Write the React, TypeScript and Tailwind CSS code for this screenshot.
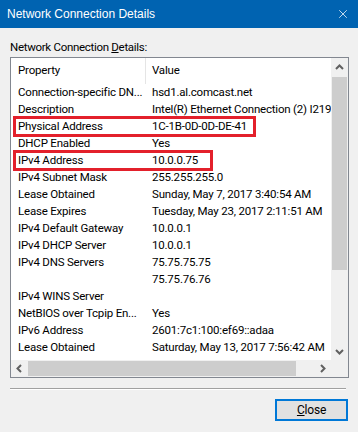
import { X } from "lucide-react";

type Row = [string, string];

const rows: Row[] = [
  ["Connection-specific DN...", "hsd1.al.comcast.net"],
  ["Description", "Intel(R) Ethernet Connection (2) I219-V"],
  ["Physical Address", "1C-1B-0D-0D-DE-41"],
  ["DHCP Enabled", "Yes"],
  ["IPv4 Address", "10.0.0.75"],
  ["IPv4 Subnet Mask", "255.255.255.0"],
  ["Lease Obtained", "Sunday, May 7, 2017 3:40:54 AM"],
  ["Lease Expires", "Tuesday, May 23, 2017 2:11:51 AM"],
  ["IPv4 Default Gateway", "10.0.0.1"],
  ["IPv4 DHCP Server", "10.0.0.1"],
  ["IPv4 DNS Servers", "75.75.75.75"],
  ["", "75.75.76.76"],
  ["IPv4 WINS Server", ""],
  ["NetBIOS over Tcpip En...", "Yes"],
  ["IPv6 Address", "2601:7c1:100:ef69::adaa"],
  ["Lease Obtained", "Saturday, May 13, 2017 7:56:42 AM"],
  ["Lease Expires", "Tuesday, May 30, 2017 7:56:42 AM"],
];

const Chevron = ({ dir }: { dir: "up" | "down" | "left" | "right" }) => {
  const d = {
    up: "M1 6 L4.5 2.5 L8 6",
    down: "M1 3 L4.5 6.5 L8 3",
    left: "M6 1 L2.5 4.5 L6 8",
    right: "M3 1 L6.5 4.5 L3 8",
  }[dir];
  return (
    <svg width="9" height="9" viewBox="0 0 9 9">
      <path d={d} fill="none" stroke="#606060" strokeWidth="2" />
    </svg>
  );
};

export default function App() {
  return (
    <div
      className="w-[358px] h-[432px] bg-[#f0f0f0] flex flex-col overflow-hidden text-black text-[11.5px] tracking-[-0.2px]"
      style={{ fontFamily: '"Roboto", "Liberation Sans", sans-serif' }}
    >
      <div className="h-[28px] bg-[#0063b1] flex items-center justify-between pl-[7px] pr-[8px] text-white tracking-normal">
        <span className="text-[12px] leading-none" style={{ fontFamily: '"Liberation Sans", sans-serif' }}>
          Network Connection Details
        </span>
        <X size={14} strokeWidth={1.3} />
      </div>

      <div className="px-[10px] pt-[12px]">
        <div className="leading-[14px] mb-[3px] tracking-[-0.3px]">
          Network Connection <span className="underline">D</span>etails:
        </div>

        <div className="w-[339px] h-[321px] border border-[#828790] bg-white flex flex-col">
          <div className="flex h-[302px]">
            <div className="relative w-[320px] overflow-hidden">
              <div className="flex h-[26px] items-center">
                <div className="w-[135px] h-full pl-[7px] flex items-center border-r border-[#e5e5e5]">Property</div>
                <div className="pl-[6px]">Value</div>
              </div>
              {rows.map(([k, v], i) => (
                <div key={i} className="flex h-[17px] items-center whitespace-nowrap">
                  <div className="w-[141px] shrink-0 pl-[7px]">{k}</div>
                  <div className="shrink-0">{v}</div>
                </div>
              ))}
              <div className="absolute left-[2px] top-[58px] w-[243px] h-[21px] border-[3px] border-[#e3202b]" />
              <div className="absolute left-[2px] top-[92px] w-[200px] h-[21px] border-[3px] border-[#e3202b]" />
            </div>
            <div className="w-[17px] bg-[#f0f0f0] flex flex-col">
              <div className="h-[19px] flex items-center justify-center">
                <Chevron dir="up" />
              </div>
              <div className="mx-[1px] h-[193px] bg-[#cdcdcd]" />
              <div className="flex-1" />
              <div className="h-[17px] flex items-center justify-center">
                <Chevron dir="down" />
              </div>
            </div>
          </div>
          <div className="flex h-[17px] bg-[#f0f0f0]">
            <div className="w-[17px] flex items-center justify-center">
              <Chevron dir="left" />
            </div>
            <div className="my-[1px] w-[268px] bg-[#cdcdcd]" />
            <div className="flex-1" />
            <div className="w-[17px] flex items-center justify-center">
              <Chevron dir="right" />
            </div>
            <div className="w-[17px]" />
          </div>
        </div>

        <div className="mt-[10px] h-[2px] w-[336px] border-t border-[#a0a0a0] border-b border-b-white" />

        <div className="flex justify-end mt-[9px]">
          <button
            type="button"
            className="w-[73px] h-[22px] bg-[#e1e1e1] border-2 border-[#0078d7] text-[12px] flex items-center justify-center"
          >
            <span className="underline">C</span>lose
          </button>
        </div>
      </div>
    </div>
  );
}
